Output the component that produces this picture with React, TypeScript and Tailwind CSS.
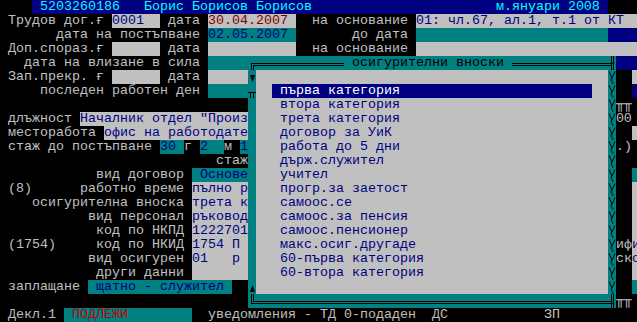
import React from "react";

type Seg = [string, number, string];

// text-mode palette
const L = "text-[#c0c0c0]";
const G = "bg-[#c0c0c0] text-[#000080]";
const T = "bg-[#008080] text-[#000080]";
const B = "bg-[#000080]";
const RD = "bg-[#c0c0c0] text-[#800000]";
const sp = (n: number) => " ".repeat(n);

const rows: Seg[][] = [
  [
    ["", 4, L],
    [" 5203260186   Борис Борисов Борисов" + sp(23) + "м.януари 2008", 72, "bg-[#000080] text-[#00ffff]"],
    ["", 4, L],
  ],
  [
    [" Трудов дог.ғ ", 14, L],
    ["0001", 6, G],
    [" дата ", 6, L],
    ["30.04.2007", 11, RD],
    ["  на основание ", 15, L],
    ["01: чл.67, ал.1, т.1 от КТ", 28, G],
  ],
  [
    [sp(7) + "дата на постъпване ", 26, L],
    ["02.05.2007", 11, T],
    [sp(7) + "до дата ", 15, L],
    ["", 24, T],
    ["", 4, B],
  ],
  [
    [" Доп.спораз.ғ ", 14, L],
    ["", 6, G],
    [" дата ", 6, L],
    ["", 11, G],
    ["  на основание ", 15, L],
    ["", 28, G],
  ],
  [
    [sp(3) + "дата на влизане в сила ", 26, L],
    ["", 11, T],
    ["", 40, L],
    ["", 3, B],
  ],
  [
    [" Зап.прекр. ғ ", 14, L],
    ["", 6, G],
    [" дата ", 6, L],
    ["", 11, G],
    ["", 42, L],
    ["", 1, G],
  ],
  [
    [sp(5) + "последен работен ден ", 26, L],
    ["", 11, T],
    ["", 42, L],
    ["", 1, B],
  ],
  [
    ["", 77, L],
    ["╥╥", 2, L],
    ["", 1, L],
  ],
  [
    [" длъжност ", 10, L],
    ['Началник отдел "Произ', 21, G],
    ["", 46, L],
    ["00", 2, L],
    ["", 1, L],
  ],
  [
    [" месторабота ", 13, L],
    ["офис на работодате", 18, G],
    ["", 48, L],
    ["", 1, G],
  ],
  [
    [" стаж до постъпване ", 20, L],
    ["30", 3, T],
    ["г ", 2, L],
    ["2", 3, T],
    ["м ", 2, L],
    ["1", 1, T],
    ["", 46, L],
    [".)", 2, L],
    ["", 1, L],
  ],
  [
    [sp(27) + "стаж", 31, L],
    ["", 49, L],
  ],
  [
    [sp(12) + "вид договор ", 24, L],
    [" Основе", 7, T],
    ["", 48, L],
    ["", 1, T],
  ],
  [
    [" (8)" + sp(6) + "работно време ", 24, L],
    ["пълно р", 7, G],
    ["", 48, L],
    ["", 1, G],
  ],
  [
    [sp(4) + "осигурителна вноска ", 24, L],
    ["трета к", 7, G],
    ["", 48, L],
    ["", 1, G],
  ],
  [
    [sp(11) + "вид персонал ", 24, L],
    ["ръковод", 7, G],
    ["", 48, L],
    ["", 1, G],
  ],
  [
    [sp(12) + "код по НКПД ", 24, L],
    ["1222701", 7, G],
    ["", 48, L],
    ["", 1, G],
  ],
  [
    [" (1754)" + sp(5) + "код по НКИД ", 24, L],
    ["1754 П", 7, G],
    ["", 46, L],
    ["иф", 2, L],
    ["и", 1, G],
  ],
  [
    [sp(11) + "вид осигурен ", 24, L],
    ["01   р", 7, G],
    ["", 46, L],
    ["ск", 2, L],
    ["о", 1, G],
  ],
  [
    [sp(12) + "други данни ", 24, L],
    ["", 7, G],
    ["", 48, L],
    ["", 1, G],
  ],
  [
    [" заплащане ", 11, L],
    [" щатно - служител", 18, T],
    ["", 50, L],
    ["", 1, T],
  ],
  [
    ["", 77, L],
    ["╥╥", 2, L],
    ["", 1, L],
  ],
  [
    [" Декл.1 ", 8, L],
    [" ПОДЛЕЖИ", 16, "bg-[#008080] text-[#c00000]"],
    ["  уведомления - ТД 0-подаден  ДС" + sp(12) + "ЗП", 56, L],
  ],
];

const items = [
  "първа категория",
  "втора категория",
  "трета категория",
  "договор за УиК",
  "работа до 5 дни",
  "държ.служител",
  "учител",
  "прогр.за заетост",
  "самоос.се",
  "самоос.за пенсия",
  "самоос.пенсионер",
  "макс.осиг.другаде",
  "60-първа категория",
  "60-втора категория",
];

function Line({ segs }: { segs: Seg[] }) {
  return (
    <div className="flex h-[14px]">
      {segs.map(([text, width, cls], i) => (
        <span key={i} className={`shrink-0 whitespace-pre ${cls}`}>
          {text.padEnd(width)}
        </span>
      ))}
    </div>
  );
}

function InsurancePopup() {
  return (
    <div className="absolute left-[248px] top-[56px] h-[252px] w-[368px] bg-[#008080]">
      <div className="absolute left-[3px] top-[7px] right-[2px] bottom-[4px] border-[3px] border-double border-black" />
      {/* corner crossings on the right edge */}
      <svg className="absolute left-[360px] top-0" width="8" height="14">
        <path d="M3.5 0V14M5.5 0V14" stroke="black" strokeWidth="1" />
      </svg>
      <svg className="absolute left-[360px] top-[238px]" width="8" height="14">
        <path d="M3.5 0V14M5.5 0V14" stroke="black" strokeWidth="1" />
      </svg>

      <div className="absolute left-[96px] top-0 h-[14px] whitespace-pre bg-[#008080] text-black">
        {" осигурителни вноски "}
      </div>

      {/* left column: scroll arrows */}
      <svg className="absolute left-0 top-[14px]" width="8" height="224">
        <rect width="8" height="224" fill="#008080" />
        <polygon points="2,5 7,5 4.5,12" fill="black" />
        <path d="M0 22.5H8M2.5 22.5V28M5.5 22.5V28" stroke="black" strokeWidth="1" />
        <polygon points="2,222 7,222 4.5,215" fill="black" />
      </svg>

      <div className="absolute left-[8px] top-[14px] h-[224px] w-[352px] bg-[#c0c0c0] pl-[16px] pt-[14px]">
        {items.map((it, i) => (
          <div
            key={it}
            className={`h-[14px] w-[320px] whitespace-pre pl-[8px] ${
              i === 0 ? "bg-[#000080] text-white" : "text-[#000080]"
            }`}
          >
            {it}
          </div>
        ))}
      </div>

      {/* right column: shaded scroll track */}
      <svg className="absolute left-[360px] top-[14px]" width="8" height="224">
        <defs>
          <pattern id="track" width="8" height="14" patternUnits="userSpaceOnUse">
            <path
              d="M1 1.5L4 8M7 1.5L4 8Q2 10.5 4 11.5Q6 12.5 4.5 13.8"
              stroke="black"
              strokeWidth="1"
              fill="none"
            />
          </pattern>
        </defs>
        <rect width="8" height="224" fill="#008080" />
        <rect width="8" height="224" fill="url(#track)" />
      </svg>
    </div>
  );
}

export default function App() {
  return (
    <div className="relative h-[322px] w-[637px] overflow-hidden bg-black font-['Liberation_Mono','DejaVu_Sans_Mono',monospace] text-[13.33px] leading-[14px]">
      {rows.map((segs, i) => (
        <Line key={i} segs={segs} />
      ))}
      <InsurancePopup />
    </div>
  );
}
